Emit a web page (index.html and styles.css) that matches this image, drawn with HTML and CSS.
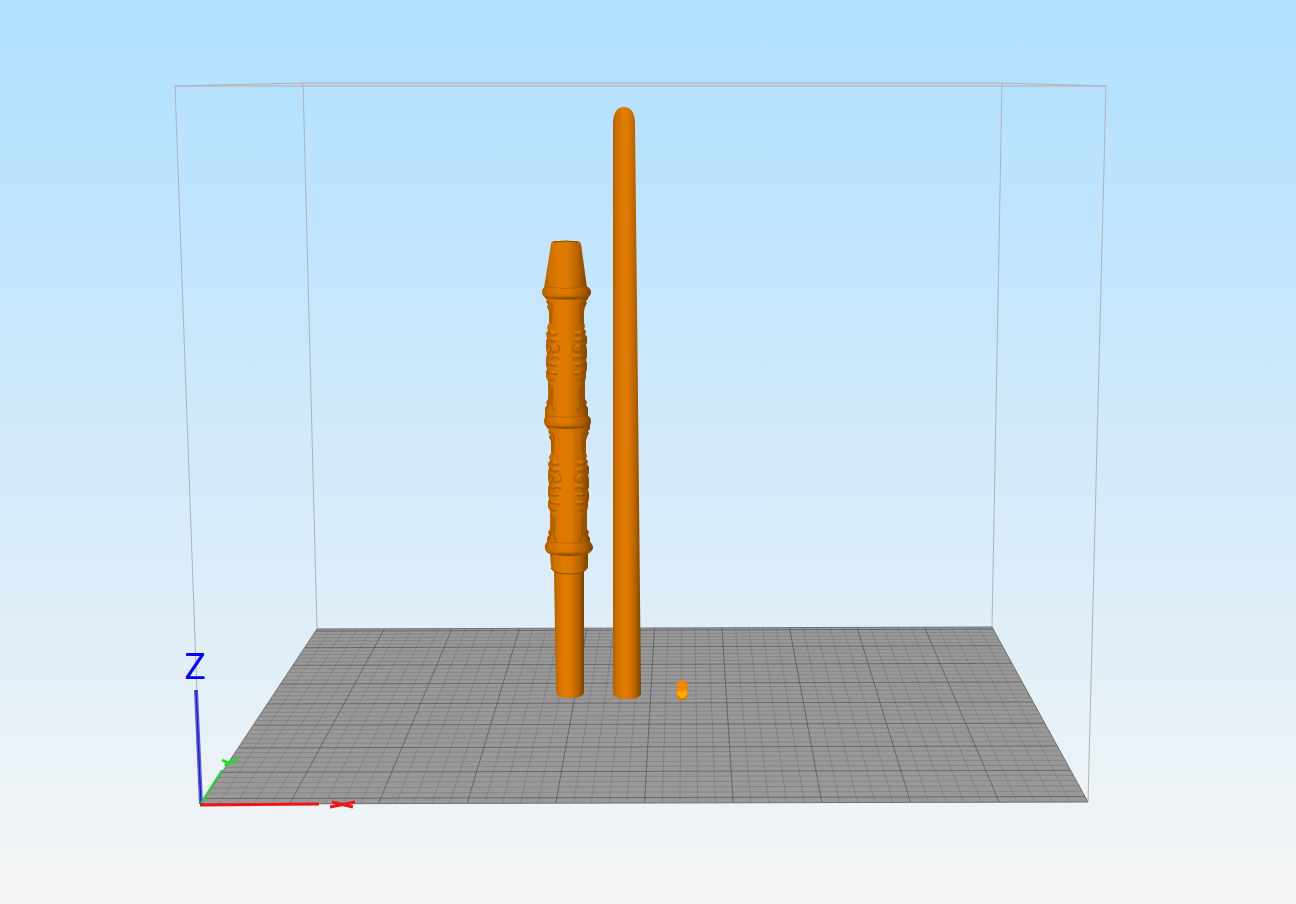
FILE: index.html
```html
<!DOCTYPE html>
<html lang="en">
  <head>
    <meta charset="utf-8">
    <title>Print bed preview</title>
    <meta name="viewport" content="width=device-width, initial-scale=1">
    <link rel="stylesheet" href="styles.css">
  </head>
  <body>
    <main class="viewport">
      <svg class="scene" viewBox="0 0 1296 904" role="img" aria-label="Build volume with three models">
        <defs>
          <linearGradient id="barrel">
            <stop offset="0" stop-color="#b05e00"/>
            <stop offset="0.12" stop-color="#cb6f00"/>
            <stop offset="0.35" stop-color="#e07a00"/>
            <stop offset="0.55" stop-color="#dc7800"/>
            <stop offset="0.8" stop-color="#b56200"/>
            <stop offset="1" stop-color="#784100"/>
          </linearGradient>
          <linearGradient id="ring" x2="0" y2="1">
            <stop offset="0" stop-color="#6e3a00" stop-opacity="0"/>
            <stop offset="0.5" stop-color="#6e3a00" stop-opacity="0.1"/>
            <stop offset="1" stop-color="#6e3a00" stop-opacity="0.9"/>
          </linearGradient>
          <!-- carved relief on one half of a grip section -->
          <g id="carving">
            <path class="carved-light" d="M-14 36q4 3 6 0M-13 42q3 3 6 2M-12 50q5 1 6 5M-12 60q4 2 6-1M-13 68q3 2 7 0M-13 76q3 2 6 1"/>
            <path class="carved-dark" d="M-18 8q5 0 5 5q-1 8-1 16M-17 11q3 6 2 16M-19 38q3-2 4 1t7 0M-17 44q2 4 9 2M-18 51q4 0 4 3t-3 5M-8 50q3 2 2 5t-7 2M-18 62q3 3 6 1t6 2M-18 69q4 3 10 1M-18 76q3 4 11 3M-17 84q3 3 6 1M-16 89q2 6 1 16q-1 6-4 9M-13 92q1 7 0 14t3 10"/>
          </g>
          <path id="grip" d="M-21 0H22L22 4L20 6L21 8L19 12L18 16V28L19 31L18 34L20 36L19 39L21 42V48L20 50L21 54V62L20 65L21 68V74L20 77V82L19 86V104L21 107L20 110L22 113V124H-21V113L-19 110L-20 107L-18 104V86L-20 82V77L-19 74L-20 70V63L-19 59L-20 54V46L-19 43L-20 39L-18 36L-19 32L-17 28V16L-19 12L-18 9L-20 7L-19 5L-21 3Z"/>
        </defs>

        <g class="volume">
          <path class="volume-top" d="M175 86L303 83H1002L1106 86Z"/>
          <path d="M303 83L317 629M1002 83L992 627M175 86L201 804M1106 86L1088 802"/>
        </g>

        <path class="bed" d="M317 629L992 627L1088 802L201 804Z"/>
        <g id="minor" class="grid-minor"></g>
        <g id="major" class="grid-major"></g>
        <path class="bed-edge" d="M317 629L992 627L1088 802L201 804Z"/>

        <g class="axes">
          <path class="axis-z" d="M196 690L201 804"/>
          <path class="axis-z-core" d="M196 690L201 804"/>
          <path class="axis-y" d="M201 803L222 770"/>
          <path class="axis-y-mark" d="M222 760L228 763L238 759M229 762L225 766"/>
          <path class="axis-x" d="M200 805L319 804"/>
          <path class="axis-x-mark" d="M332 802L353 807M355 802L330 807"/>
          <text class="axis-label" x="195" y="679">Z</text>
        </g>

        <g class="handle">
          <path fill="url(#barrel)" d="M554 570H584V693Q583 698 570 698Q557 698 556 693Z"/>
          <path fill="url(#barrel)" d="M550 553H588V567Q586 574 569 574Q552 574 551 567Z"/>
          <path class="seam" d="M551 568Q554 574 569 574Q584 574 587 568"/>
          <use fill="url(#barrel)" href="#grip" x="568" y="425"/>
          <use fill="url(#barrel)" href="#grip" x="566" y="295"/>
          <path fill="url(#barrel)" d="M551 244Q551 241 556 241H576Q580 241 581 244L587 288H544Z"/>
          <path class="lip" d="M553 242Q566 240 578 242"/>
          <use href="#carving" x="565" y="295"/>
          <use href="#carving" transform="translate(567 295) scale(-1 1)"/>
          <use href="#carving" x="567" y="425"/>
          <use href="#carving" transform="translate(569 425) scale(-1 1)"/>
          <g fill="url(#barrel)">
            <path d="M546 286Q566 290 586 286Q591 288 591 292Q591 296 587 298Q566 301 546 298Q542 296 542 292Q542 288 546 286Z"/>
            <path d="M547 415Q567 418 587 415Q591 417 591 421Q591 425 588 427Q567 431 547 427Q544 425 544 421Q544 417 547 415Z"/>
            <path d="M548 541Q568 544 589 541Q593 544 593 548Q592 552 587 554Q568 558 550 554Q545 552 545 548Q544 544 548 541Z"/>
          </g>
          <g fill="url(#ring)">
            <path d="M542 292H591Q591 296 587 298Q566 301 546 298Q542 296 542 292Z"/>
            <path d="M544 421H591Q591 425 588 427Q567 431 547 427Q544 425 544 421Z"/>
            <path d="M545 548H593Q592 552 587 554Q568 558 550 554Q545 552 545 548Z"/>
          </g>
          <path class="crease" d="M545 287Q566 290 587 287M547 416Q567 419 588 416M548 542Q568 545 589 542"/>
        </g>

        <path fill="url(#barrel)" d="M613 122Q614 107 624 107Q634 107 635 122L638 400L641 694Q640 699 627 699Q614 699 613 694Z"/>

        <g class="pin">
          <path fill="#f58700" d="M677 685L679 681L682 680L686 681L688 686L687 690L688 696L684 700H679L676 696L677 690Z"/>
          <path fill="#d97400" d="M676 694L679 697L682 699L688 695L685 700H679Z"/>
          <path fill="#ffab00" d="M678 691L682 692L686 690L687 694L684 698H680L677 694Z"/>
        </g>
      </svg>
    </main>
    <script src="grid.js"></script>
  </body>
</html>
```
FILE: styles.css
```css
body {
  margin: 0;
  font-family: Roboto, sans-serif;
}
.viewport {
  display: flex;
  height: 100vh;
  background: linear-gradient(#b0e0ff 0%, #b4e1ff 8%, #c4e6fd 30%, #d3eafa 50%, #e0eef8 70%, #edf3f6 88%, #f6f6f6 100%);
}
.scene {
  flex: 1;
  min-width: 0;
  height: 100%;
}
.volume {
  fill: none;
  stroke: #aeb3b6;
  stroke-width: 1;
}
.volume .volume-top {
  fill: #c3d7e4;
}
.bed {
  fill: #999;
}
.bed-edge {
  fill: none;
  stroke: #707070;
  stroke-width: 1;
}
.grid-minor {
  stroke: #505050;
  stroke-opacity: 0.25;
}
.grid-major {
  stroke: #404040;
  stroke-opacity: 0.55;
}
.axes {
  fill: none;
}
.axis-x,
.axis-x-mark {
  stroke: #f01414;
  stroke-width: 3;
}
.axis-y,
.axis-y-mark {
  stroke: #22dc2c;
  stroke-width: 2;
}
.axis-y-mark {
  stroke-width: 3;
}
.axis-z {
  stroke: #5a5ade;
  stroke-width: 4;
}
.axis-z-core {
  stroke: #1818a0;
  stroke-width: 1;
}
.axis-label {
  fill: #0505ee;
  stroke: #0505ee;
  stroke-width: 0;
  font-size: 36px;
  text-anchor: middle;
}
.carved-dark,
.carved-light,
.crease {
  fill: none;
  stroke: #7c4200;
  stroke-width: 2;
  stroke-opacity: 0.35;
}
.carved-light {
  stroke: #f08a10;
  stroke-opacity: 0.5;
}
.crease {
  stroke-width: 1;
}
.seam,
.lip {
  fill: none;
  stroke: #8c4a00;
  stroke-width: 1;
}
```
FILE: grid.js
```javascript
const minor = document.getElementById("minor");
const major = document.getElementById("major");

// Bed depth in major cells, and how fast the view shrinks per cell.
const depth = 8.33;
const falloff = 0.0377;

function addLine(group, x1, y1, x2, y2) {
  const line = document.createElementNS("http://www.w3.org/2000/svg", "line");
  line.setAttribute("x1", x1);
  line.setAttribute("y1", y1);
  line.setAttribute("x2", x2);
  line.setAttribute("y2", y2);
  group.appendChild(line);
}

// Lines running away from the viewer, five minor cells to a major one.
for (let i = 1; i < 50; i += 1) {
  const t = i / 50;
  addLine(i % 5 === 0 ? major : minor, 201 + 887 * t, 804 - 2 * t, 317 + 675 * t, 629 - 2 * t);
}

// Lines running across, the first major one a single minor cell in.
for (let i = 1; i / 5 < depth; i += 1) {
  const scale = 1 / (1 + falloff * i / 5);
  const y = 72 + 732 * scale;
  const t = (804 - y) / 175;
  addLine(i % 5 === 1 ? major : minor, 201 + 116 * t, y, 1088 - 96 * t, y - 2);
}
```
